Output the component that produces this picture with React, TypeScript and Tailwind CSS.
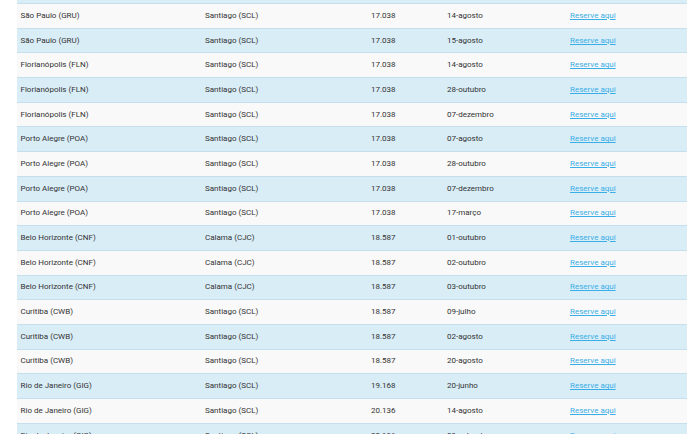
import React from 'react';

type Row = { from: string; to: string; price: string; date: string; link?: boolean };

const rows: Row[] = [
  { from: '', to: '', price: '', date: '', link: false },
  { from: 'São Paulo (GRU)', to: 'Santiago (SCL)', price: '17.038', date: '14-agosto' },
  { from: 'São Paulo (GRU)', to: 'Santiago (SCL)', price: '17.038', date: '15-agosto' },
  { from: 'Florianópolis (FLN)', to: 'Santiago (SCL)', price: '17.038', date: '14-agosto' },
  { from: 'Florianópolis (FLN)', to: 'Santiago (SCL)', price: '17.038', date: '28-outubro' },
  { from: 'Florianópolis (FLN)', to: 'Santiago (SCL)', price: '17.038', date: '07-dezembro' },
  { from: 'Porto Alegre (POA)', to: 'Santiago (SCL)', price: '17.038', date: '07-agosto' },
  { from: 'Porto Alegre (POA)', to: 'Santiago (SCL)', price: '17.038', date: '28-outubro' },
  { from: 'Porto Alegre (POA)', to: 'Santiago (SCL)', price: '17.038', date: '07-dezembro' },
  { from: 'Porto Alegre (POA)', to: 'Santiago (SCL)', price: '17.038', date: '17-março' },
  { from: 'Belo Horizonte (CNF)', to: 'Calama (CJC)', price: '18.587', date: '01-outubro' },
  { from: 'Belo Horizonte (CNF)', to: 'Calama (CJC)', price: '18.587', date: '02-outubro' },
  { from: 'Belo Horizonte (CNF)', to: 'Calama (CJC)', price: '18.587', date: '03-outubro' },
  { from: 'Curitiba (CWB)', to: 'Santiago (SCL)', price: '18.587', date: '09-julho' },
  { from: 'Curitiba (CWB)', to: 'Santiago (SCL)', price: '18.587', date: '02-agosto' },
  { from: 'Curitiba (CWB)', to: 'Santiago (SCL)', price: '18.587', date: '20-agosto' },
  { from: 'Rio de Janeiro (GIG)', to: 'Santiago (SCL)', price: '19.168', date: '20-junho' },
  { from: 'Rio de Janeiro (GIG)', to: 'Santiago (SCL)', price: '20.136', date: '14-agosto' },
  { from: 'Rio de Janeiro (GIG)', to: 'Santiago (SCL)', price: '20.136', date: '09-setembro' },
];

export default function App() {
  return (
    <div className="h-[434px] overflow-hidden bg-white pl-[17px] pr-[4px] font-['Roboto',sans-serif] text-[8px] text-[#333]">
      <table className="-mt-[21.7px] w-full border-collapse">
        <tbody>
          {rows.map((r, i) => (
            <tr
              key={i}
              className={`h-[24.7px] border-t border-[#c6dfec] ${i % 2 === 0 ? 'bg-[#d9edf7]' : 'bg-[#f9f9f9]'}`}
            >
              <td className="w-[185px] pl-[3.5px] align-middle">{r.from}</td>
              <td className="w-[166px] pl-[3px] align-middle">{r.to}</td>
              <td className="w-[76px] pl-[3px] align-middle">{r.price}</td>
              <td className="w-[123px] pl-[3px] align-middle">{r.date}</td>
              <td className="pl-[3px] align-middle">
                {r.link !== false && (
                  <a href="#" className="text-[#3aaee6] underline">
                    Reserve aqui
                  </a>
                )}
              </td>
            </tr>
          ))}
        </tbody>
      </table>
    </div>
  );
}
